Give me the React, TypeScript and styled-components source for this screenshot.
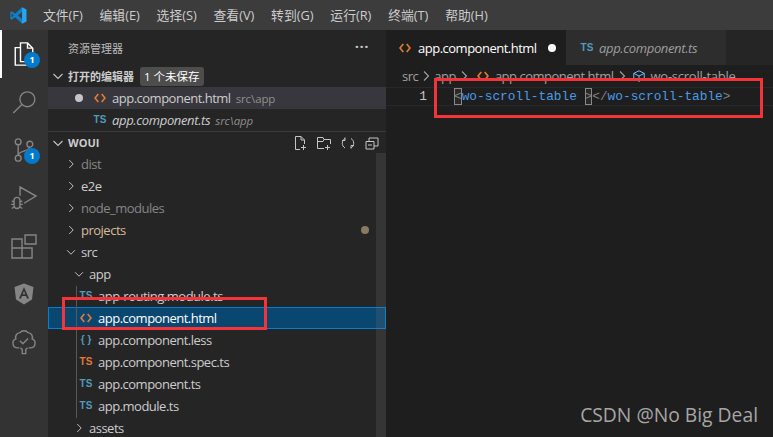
import React from "react";
import styled, { createGlobalStyle } from "styled-components";

const UI = `"Open Sans", "Noto Sans CJK SC", sans-serif`;
const Global = createGlobalStyle`
  html, body { margin: 0; padding: 0; background: #1e1e1e; overflow: hidden; }
  #root { width: 773px; height: 437px; }
`;

const Window = styled.div`
  position: relative; width: 773px; height: 437px; overflow: hidden;
  display: flex; flex-direction: column; background: #1e1e1e; font-family: ${UI}; font-size: 13px; letter-spacing: -0.5px;
`;
const TitleBar = styled.header`
  height: 30px; flex: none; background: #3c3c3c; display: flex; align-items: center; color: #cccccc;
`;
const Logo = styled.div`width: 35px; display: flex; justify-content: center; padding-left: 1px; box-sizing: border-box;`;
const MenuItem = styled.span`padding: 0 8.4px; white-space: nowrap; letter-spacing: 0; font-size: 12.8px; line-height: 30px; &:first-of-type { margin-left: -0.4px; }`;
const Main = styled.div`flex: 1; display: flex; min-height: 0;`;

const ActivityBar = styled.nav`width: 48px; flex: none; background: #333333; display: flex; flex-direction: column;`;
const ActivityItem = styled.div<{ $active?: boolean }>`
  position: relative; height: 48px; display: flex; align-items: center; justify-content: center;
  color: ${p => (p.$active ? "#ffffff" : "#858585")};
  border-left: 2px solid ${p => (p.$active ? "#ffffff" : "transparent")};
  border-right: 2px solid transparent;
`;
const Badge = styled.span`
  position: absolute; left: 22px; top: 22px; width: 16px; height: 16px; border-radius: 50%;
  background: #007acc; color: #fff; font: 700 9px/16px ${UI}; letter-spacing: 0; text-align: center;
`;

const SideBar = styled.aside`width: 338px; flex: none; background: #252526; display: flex; flex-direction: column; color: #cccccc; overflow: hidden;`;
const SideTitle = styled.div`
  height: 35px; flex: none; display: flex; align-items: center; justify-content: space-between;
  padding: 0 17px 0 20px; font-size: 11px; letter-spacing: 0; color: #bbbbbb;
`;
const More = styled.span`font-size: 15px; font-weight: 700; line-height: 10px; letter-spacing: 0.5px; color: #c5c5c5; margin-top: -4px;`;
const SectionHeader = styled.div<{ $border?: boolean }>`
  height: 22px; flex: none; box-sizing: border-box; display: flex; align-items: center; font-weight: 700; font-size: 11px; letter-spacing: 0;
  color: #cccccc; ${p => p.$border && "border-top: 1px solid #3c3c3c;"}
`;
const Chevron = styled.span`width: 20px; flex: none; display: flex; justify-content: center; color: #c5c5c5;`;
const Dirty = styled.span`
  margin-left: 6px; height: 19px; line-height: 19px; padding: 0 4px; border-radius: 3px; background: #4d4d4d; color: #fff; font-size: 11.5px; font-weight: 400; letter-spacing: 0;
`;
const Row = styled.div<{ $indent: number; $hover?: boolean; $selected?: boolean }>`
  position: relative; height: 22px; flex: none; box-sizing: border-box; display: flex; align-items: center;
  padding-left: ${p => p.$indent}px; white-space: nowrap;
  background: ${p => (p.$selected ? "#094771" : p.$hover ? "#37373d" : "transparent")};
  ${p => p.$selected && "outline: 1px solid #007fd4; outline-offset: -1px;"}
`;
const RowChevron = styled.span`width: 14px; margin-right: 3px; flex: none; display: flex; justify-content: center; color: #c5c5c5;`;
const Label = styled.span<{ $tone?: string; $italic?: boolean }>`
  color: ${p => p.$tone || "#cccccc"}; ${p => p.$italic && "font-style: italic; letter-spacing: -0.35px;"}
`;
const Desc = styled.span<{ $italic?: boolean }>`
  margin-left: 5px; font-size: 11.5px; color: #8f8f8f; letter-spacing: -0.1px; ${p => p.$italic && "font-style: italic;"}
`;
const Glyph = styled.span<{ $color: string; $gap?: number }>`
  width: 14px; flex: none; margin-right: ${p => p.$gap ?? 5}px; display: flex; justify-content: center;
  color: ${p => p.$color}; font: 700 10px/1 "Liberation Sans", sans-serif; letter-spacing: 0;
`;
const Bullet = styled.span`width: 8px; height: 8px; border-radius: 50%; background: #c5c5c5; flex: none; margin: 0 10px 0 27px;`;
const Actions = styled.div`margin-left: auto; display: flex; gap: 8px; padding-right: 6px; color: #c5c5c5; align-items: center;`;
const Tree = styled.div`position: relative; flex: 1; min-height: 0;`;
const Guide = styled.div`position: absolute; left: 28px; top: 133px; height: 132px; width: 1px; background: #585858;`;
const Scroll = styled.div`position: absolute; right: 0; top: 0; bottom: 0; width: 10px; background: rgba(121,121,121,.2);`;
const Decor = styled.span`position: absolute; left: 313px; top: 7px; width: 8px; height: 8px; border-radius: 50%; background: #8a7a64;`;

const Editor = styled.section`flex: 1; min-width: 0; display: flex; flex-direction: column; background: #1e1e1e;`;
const Tabs = styled.div`height: 35px; flex: none; display: flex; background: #252526;`;
const Tab = styled.div<{ $active?: boolean; $w: number }>`
  width: ${p => p.$w}px; box-sizing: border-box; display: flex; align-items: center; padding-left: ${p => (p.$active ? 12 : 14)}px;
  background: ${p => (p.$active ? "#1e1e1e" : "#2d2d2d")}; white-space: nowrap;
`;
const TabDot = styled.span`width: 8px; height: 8px; border-radius: 50%; background: #fff; margin-left: 11px;`;
const Crumbs = styled.div`
  height: 22px; flex: none; display: flex; align-items: center; padding-left: 16px; color: #a0a0a0; white-space: nowrap;
`;
const CrumbSep = styled.span`display: flex; color: #a0a0a0;`;
const CrumbIcon = styled.span<{ $lead: number }>`display: flex; width: 14px; margin: 0 5px 0 ${p => p.$lead}px; justify-content: center;`;
const CrumbTail = styled.span`letter-spacing: -0.25px;`;
const CodeRow = styled.div`height: 17px; border-top: 1px solid #282828; border-bottom: 1px solid #282828; display: flex; align-items: center;`;
const LineNo = styled.span`width: 45px; flex: none; text-align: right; color: #c6c6c6; font: 12.8px "Liberation Mono", monospace; letter-spacing: 0; padding-right: 4px; box-sizing: border-box;`;
const Code = styled.code`
  margin-left: 23px; font: 12.8px/17px "Liberation Mono", monospace; letter-spacing: 0; white-space: pre; color: #4a9be6; display: flex;
`;
const Punct = styled.span<{ $boxed?: boolean }>`
  color: #808080; ${p => p.$boxed && "outline: 1px solid #888; outline-offset: -1px; background: rgba(255,255,255,.05);"}
`;
const Callout = styled.div<{ $x: number; $y: number; $w: number; $h: number }>`
  position: absolute; left: ${p => p.$x}px; top: ${p => p.$y}px; width: ${p => p.$w}px; height: ${p => p.$h}px;
  box-sizing: border-box; border: 3px solid #f5343a; pointer-events: none;
`;
const Watermark = styled.div`
  position: absolute; right: 15px; bottom: 9px; color: #a6a6a6; font: 19.3px "Open Sans", sans-serif; letter-spacing: 0; white-space: nowrap;
`;

const ChevronR = () => <svg width="16" height="16" viewBox="0 0 16 16" fill="none" stroke="currentColor" strokeWidth="1.1"><path d="M6 3.5 10.5 8 6 12.5" /></svg>;
const ChevronD = () => <svg width="16" height="16" viewBox="0 0 16 16" fill="none" stroke="currentColor" strokeWidth="1.1"><path d="M3.5 6 8 10.5 12.5 6" /></svg>;
const Html = () => <svg width="12" height="10" viewBox="0 0 12 10" fill="none" stroke="#e37933" strokeWidth="1.7"><path d="M4.3 1 1 5l3.3 4M7.7 1 11 5 7.7 9" /></svg>;
const Cube = () => <svg width="16" height="16" viewBox="0 0 16 16" fill="none" stroke="#75beff" strokeWidth="1.1"><path d="M8 2 14 5v6l-6 3-6-3V5zM2 5l6 3 6-3M8 8v6" /></svg>;
const VsLogo = () => (
  <svg width="17" height="17" viewBox="0 0 100 100">
    <path fill="#0f7fcb" fillRule="evenodd" d="M71 2 30 40 10 25 2 30v40l8 5 20-15 41 38V70L46 50 71 30zM10 38v24l12-12z" />
    <path fill="#27a4f2" d="M71 2 97 14v72L71 98z" />
  </svg>
);
const stroke = { fill: "none", stroke: "currentColor", strokeWidth: 1.2 } as const;
const Act = ({ d, size = 28 }: { d: string; size?: number }) => <svg width={size} height={size} viewBox="0 0 24 24" {...stroke}><path d={d} /></svg>;

const small = { fill: "none", stroke: "currentColor", strokeWidth: 1 } as const;
const NewFile = () => <svg width="16" height="16" viewBox="0 0 16 16" {...small}><path d="M8 14.5H3.500v-13H9l3.500 3.500v4M9 1.500V5h3.500M11.500 10v5M9 12.500h5" /></svg>;
const NewFolder = () => <svg width="16" height="16" viewBox="0 0 16 16" {...small}><path d="M8 13.500H1.500v-11H7l1 2h6.500V9M1.500 6.500H7l1-2M11.500 10v5M9 12.500h5" /></svg>;
const Refresh = () => <svg width="16" height="16" viewBox="0 0 16 16" {...small}><path d="M5 3.500A5.500 5.500 0 0 0 5 13M11 3.500A5.500 5.500 0 0 1 11 13M11 13.500v-3h3M2 5.500h3v-3" /></svg>;
const Collapse = () => <svg width="16" height="16" viewBox="0 0 16 16" {...small}><path d="M2 6.500h8v7.500H2zM5 6.500V3h9v8h-4M4 10h4" /></svg>;

const Menu = ["文件(F)", "编辑(E)", "选择(S)", "查看(V)", "转到(G)", "运行(R)", "终端(T)", "帮助(H)"];

type Node = { name: string; kind?: "closed" | "open" | "ts" | "tsSpec" | "html" | "less"; indent: number; tone?: string; selected?: boolean; decor?: boolean };
const Nodes: Node[] = [
  { name: "dist", kind: "closed", indent: 16, tone: "#858585" },
  { name: "e2e", kind: "closed", indent: 16 },
  { name: "node_modules", kind: "closed", indent: 16, tone: "#858585" },
  { name: "projects", kind: "closed", indent: 16, tone: "#d7ba9d", decor: true },
  { name: "src", kind: "open", indent: 16 },
  { name: "app", kind: "open", indent: 24 },
  { name: "app-routing.module.ts", kind: "ts", indent: 31 },
  { name: "app.component.html", kind: "html", indent: 31, selected: true, tone: "#ffffff" },
  { name: "app.component.less", kind: "less", indent: 31 },
  { name: "app.component.spec.ts", kind: "tsSpec", indent: 31 },
  { name: "app.component.ts", kind: "ts", indent: 31 },
  { name: "app.module.ts", kind: "ts", indent: 31 },
  { name: "assets", kind: "closed", indent: 24 },
];

const NodeIcon = ({ kind }: { kind: Node["kind"] }) => {
  if (kind === "closed") return <RowChevron><ChevronR /></RowChevron>;
  if (kind === "open") return <RowChevron><ChevronD /></RowChevron>;
  if (kind === "html") return <Glyph $color="#e37933"><Html /></Glyph>;
  if (kind === "less") return <Glyph $color="#519aba">{"{ }"}</Glyph>;
  if (kind === "tsSpec") return <Glyph $color="#e37933">TS</Glyph>;
  return <Glyph $color="#519aba">TS</Glyph>;
};

export default function App() {
  return (
    <Window>
      <Global />
      <TitleBar>
        <Logo><VsLogo /></Logo>
        {Menu.map(m => <MenuItem key={m}>{m}</MenuItem>)}
      </TitleBar>
      <Main>
        <ActivityBar>
          <ActivityItem $active>
            <Act d="M9 2.500h6l4.500 4.500v11.500H9zM15 2.500V7h4.500M9 6.500H4.500v15H15v-3" />
            <Badge>1</Badge>
          </ActivityItem>
          <ActivityItem><Act d="M14.900 3.300a6.400 6.400 0 1 1 0 12.800 6.400 6.400 0 0 1 0-12.800zM10.200 14.200 2.800 21.400" /></ActivityItem>
          <ActivityItem>
            <Act d="M7 7.500a2.500 2.500 0 1 0 0-5 2.500 2.500 0 0 0 0 5zM7 21.500a2.500 2.500 0 1 0 0-5 2.500 2.500 0 0 0 0 5zM17 9.500a2.500 2.500 0 1 0 0-5 2.500 2.500 0 0 0 0 5zM7 7.500v9M17 9.500c0 4-10 3-10 7" />
            <Badge>1</Badge>
          </ActivityItem>
          <ActivityItem><Act d="M8.600 10V2.600L22.300 10.300 12 16.500M3.500 14a2.500 2.500 0 0 1 5 0v4.500a2.500 2.500 0 0 1-5 0zM1.500 14.500l2 1M1 17.500h2.500M1.500 21l2-1.500M10.500 14.500l-2 1M11 17.500H8.500M10.500 21l-2-1.500" /></ActivityItem>
          <ActivityItem><Act d="M1.700 6H10.300V13.700H18.900V22.300H1.700zM1.700 13.700H10.300V22.300M12.900 2.600H22.300V10.300H12.900z" /></ActivityItem>
          <ActivityItem>
            <svg width="24" height="24" viewBox="0 0 24 24"><path fill="currentColor" fillRule="evenodd" d="M12 1.500 21.500 5 20 17.500 12 22.500 4 17.500 2.500 5zM12 5 7 16.500h2l1-2.500h4l1 2.500h2zM12 9l1.300 3.300h-2.600z" /></svg>
          </ActivityItem>
          <ActivityItem>
            <Act d="M8 17H6.500a4 4 0 0 1-1.500-7.700 4 4 0 0 1 3.500-5.300 4.500 4.500 0 0 1 7 0 4 4 0 0 1 3.500 5.300A4 4 0 0 1 17.500 17H16M9 17l1.500 1.500v3.500h3V18.500L15 17M8.500 11l2.500 2.500 4.500-4.500" />
          </ActivityItem>
        </ActivityBar>
        <SideBar>
          <SideTitle>资源管理器<More>···</More></SideTitle>
          <SectionHeader><Chevron><ChevronD /></Chevron>打开的编辑器<Dirty>1 个未保存</Dirty></SectionHeader>
          <Row $indent={0} $hover><Bullet /><Glyph $color="#e37933"><Html /></Glyph><Label>app.component.html</Label><Desc>src\app</Desc></Row>
          <Row $indent={45}><Glyph $color="#519aba">TS</Glyph><Label $italic>app.component.ts</Label><Desc $italic>src\app</Desc></Row>
          <SectionHeader $border><Chevron><ChevronD /></Chevron>WOUI<Actions><NewFile /><NewFolder /><Refresh /><Collapse /></Actions></SectionHeader>
          <Tree>
            {Nodes.map(n => (
              <Row key={n.name} $indent={n.indent} $selected={n.selected}>
                <NodeIcon kind={n.kind} />
                <Label $tone={n.tone}>{n.name}</Label>
                {n.decor && <Decor />}
              </Row>
            ))}
            <Guide />
            <Scroll />
          </Tree>
        </SideBar>
        <Editor>
          <Tabs>
            <Tab $active $w={180}>
              <Glyph $color="#e37933" $gap={6}><Html /></Glyph>
              <Label $tone="#ffffff">app.component.html</Label><TabDot />
            </Tab>
            <Tab $w={160}>
              <Glyph $color="#519aba"><span>TS</span></Glyph>
              <Label $tone="#9d9d9d" $italic>app.component.ts</Label>
            </Tab>
          </Tabs>
          <Crumbs>
            src<CrumbSep><ChevronR /></CrumbSep>app<CrumbSep><ChevronR /></CrumbSep>
            <CrumbIcon $lead={4}><Html /></CrumbIcon>app.component.html<CrumbSep><ChevronR /></CrumbSep>
            <CrumbIcon $lead={2}><Cube /></CrumbIcon><CrumbTail>wo-scroll-table</CrumbTail>
          </Crumbs>
          <CodeRow>
            <LineNo>1</LineNo>
            <Code><Punct $boxed>&lt;</Punct>wo-scroll-table <Punct $boxed>&gt;</Punct><Punct>&lt;/</Punct>wo-scroll-table<Punct>&gt;</Punct></Code>
          </CodeRow>
        </Editor>
      </Main>
      <Callout $x={434} $y={78} $w={329} $h={40} />
      <Callout $x={62} $y={297} $w={205} $h={33} />
      <Watermark>CSDN @No Big Deal</Watermark>
    </Window>
  );
}
